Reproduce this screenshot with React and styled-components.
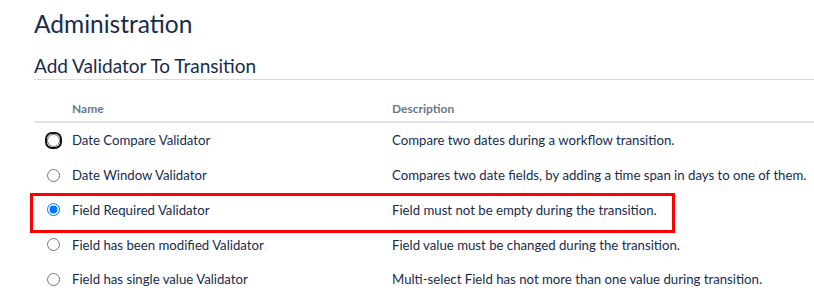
import React from "react";
import styled, { createGlobalStyle } from "styled-components";

const Global = createGlobalStyle`
  html, body { margin: 0; padding: 0; background: #fff; }
  body { font-family: Lato, "Open Sans", sans-serif; color: #172b4d; }
`;

const Page = styled.div`
  padding: 8px 0 0 34px;
  width: 780px;
`;

const Title = styled.h1`
  margin: 0;
  font-size: 24.5px;
  font-weight: 400;
  line-height: 32px;
  color: #172b4d;
`;

const Section = styled.h2`
  margin: 15px 0 0;
  font-size: 19px;
  font-weight: 400;
  line-height: 22px;
  color: #172b4d;
  padding-bottom: 2px;
  border-bottom: 1px solid #dcdcdc;
`;

const Table = styled.div`
  margin-top: 16px;
  display: grid;
  grid-template-columns: 38px 320px 1fr;
`;

const HeadCell = styled.div`
  font-size: 12px;
  font-weight: 700;
  color: #6b778c;
  height: 25px;
  line-height: 26px;
  border-bottom: 2px solid #dfe1e6;
`;

const Row = styled.div`
  display: contents;
`;

const Cell = styled.div`
  position: relative;
  height: 34.75px;
  display: flex;
  align-items: center;
  font-size: 13.2px;
  color: #172b4d;
  white-space: nowrap;
`;

const RadioCell = styled(Cell)`
  padding-left: 11px;
`;

const FocusRing = styled.span`
  display: inline-flex;
  align-items: center;
  justify-content: center;
  width: 17px;
  height: 17px;
  box-sizing: border-box;
  border-radius: 7px;
  border: 2px solid ${(p) => (p.$on ? "#111" : "transparent")};
`;

const Radio = styled.input.attrs({ type: "radio", name: "validator" })`
  margin: 0;
  width: 13px;
  height: 13px;
  accent-color: #0075ff;
  outline: none;
`;

const Highlight = styled.div`
  position: absolute;
  left: -4px;
  top: 0px;
  width: 645px;
  height: 40px;
  box-sizing: border-box;
  border: 3px solid #ff0000;
  pointer-events: none;
`;

const rows = [
  ["Date Compare Validator", "Compare two dates during a workflow transition."],
  ["Date Window Validator", "Compares two date fields, by adding a time span in days to one of them."],
  ["Field Required Validator", "Field must not be empty during the transition."],
  ["Field has been modified Validator", "Field value must be changed during the transition."],
  ["Field has single value Validator", "Multi-select Field has not more than one value during transition."],
];

export default function App() {
  return (
    <>
      <Global />
      <Page>
        <Title>Administration</Title>
        <Section>Add Validator To Transition</Section>
        <Table>
          <HeadCell />
          <HeadCell>Name</HeadCell>
          <HeadCell>Description</HeadCell>
          {rows.map(([name, desc], i) => (
            <Row key={name}>
              <RadioCell>
                <FocusRing $on={i === 0}>
                  <Radio defaultChecked={i === 2} />
                </FocusRing>
                {i === 2 && <Highlight />}
              </RadioCell>
              <Cell>{name}</Cell>
              <Cell>{desc}</Cell>
            </Row>
          ))}
        </Table>
      </Page>
    </>
  );
}
